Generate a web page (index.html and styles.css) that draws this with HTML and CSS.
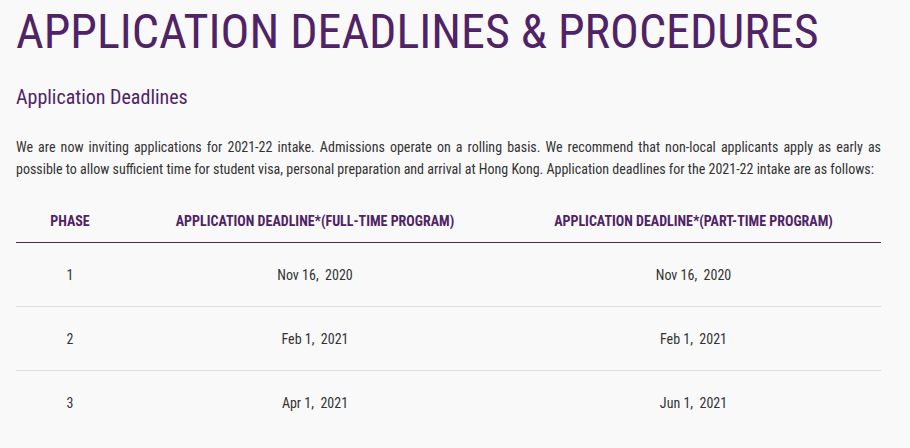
FILE: index.html
```html
<!DOCTYPE html>
<html lang="en">
<head>
<meta charset="utf-8">
<title>Application Deadlines &amp; Procedures</title>
<link rel="stylesheet" href="styles.css">
</head>
<body>
<main class="page">
  <h1 class="title">APPLICATION DEADLINES &amp; PROCEDURES</h1>
  <h2 class="subtitle">Application Deadlines</h2>
  <p class="intro">We are now inviting applications for 2021-22 intake. Admissions operate on a rolling basis. We recommend that non-local applicants apply as early as possible to allow sufficient time for student visa, personal preparation and arrival at Hong Kong. Application deadlines for the 2021-22 intake are as follows:</p>
  <table class="deadlines">
    <thead>
      <tr>
        <th class="col-phase">PHASE</th>
        <th class="col-ft">APPLICATION DEADLINE*(FULL-TIME PROGRAM)</th>
        <th class="col-pt">APPLICATION DEADLINE*(PART-TIME PROGRAM)</th>
      </tr>
    </thead>
    <tbody>
      <tr><td>1</td><td>Nov 16,&nbsp; 2020</td><td>Nov 16,&nbsp; 2020</td></tr>
      <tr><td>2</td><td>Feb 1,&nbsp; 2021</td><td>Feb 1,&nbsp; 2021</td></tr>
      <tr><td>3</td><td>Apr 1,&nbsp; 2021</td><td>Jun 1,&nbsp; 2021</td></tr>
    </tbody>
  </table>
</main>
</body>
</html>
```
FILE: styles.css
```css
html, body {
  margin: 0;
  padding: 0;
  background: #f9f9f9;
}
body {
  font-family: "Roboto Condensed", Roboto, "Liberation Sans", sans-serif;
  font-stretch: condensed;
  color: #333;
}
.page {
  padding: 0 29px 0 16px;
}
.title {
  margin: 0;
  padding-top: 4px;
  font-weight: 400;
  font-size: 48px;
  line-height: 56px;
  color: #4f2366;
  white-space: nowrap;
}
.subtitle {
  margin: 25px 0 0;
  font-weight: 400;
  font-size: 20px;
  line-height: 24px;
  color: #4f2366;
}
.intro {
  margin: 27px 0 0;
  font-size: 14px;
  line-height: 22px;
  text-align: justify;
  color: #333;
}
.deadlines {
  width: 865px;
  margin-top: 20px;
  border-collapse: collapse;
}
.deadlines th {
  font-size: 14px;
  font-weight: 700;
  color: #4f2366;
  padding: 13px 0 13px;
  border-bottom: 1px solid #4f2366;
  text-align: center;
}
.col-phase { width: 108px; }
.col-ft { width: 382px; }
.deadlines td {
  font-size: 14px;
  color: #333;
  text-align: center;
  height: 63px;
  padding: 0;
  border-bottom: 1px solid #ddd;
}
.deadlines tbody tr:last-child td {
  border-bottom: none;
}
```
